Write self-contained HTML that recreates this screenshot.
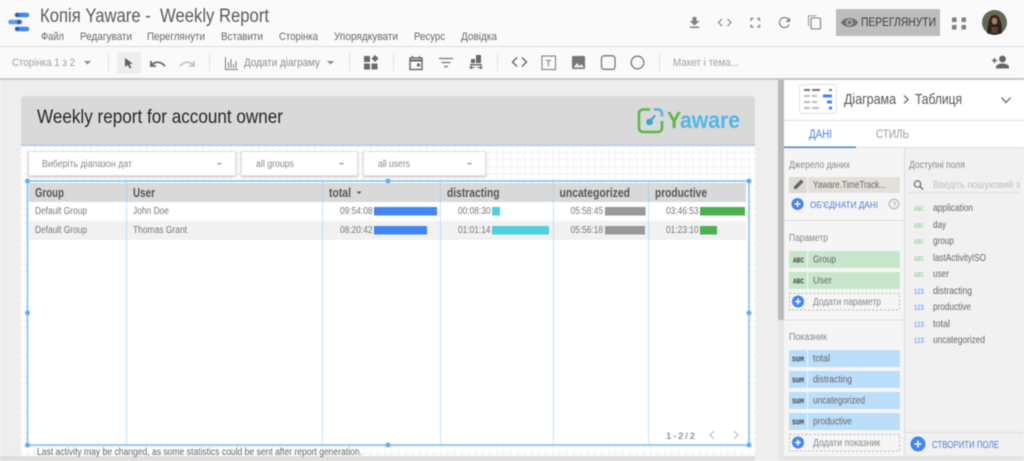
<!DOCTYPE html>
<html><head><meta charset="utf-8"><style>
html,body{margin:0;padding:0;width:1024px;height:461px;overflow:hidden;background:#fff}
svg{display:block;filter:blur(.4px)}
text{font-family:"Liberation Sans",sans-serif;white-space:pre}
.m{font-size:11px;fill:#666}
.r{font-size:10px;fill:#777}
.h{font-size:12.500px;font-weight:bold;fill:#555}
.l{font-size:10px;fill:#888}
.c{font-size:10px;fill:#666}
.b{font-size:7.500px;font-weight:bold;font-family:"Liberation Mono",monospace;fill:#444}
.f{font-size:10.500px;fill:#666}
.ga{font-size:7.500px;font-weight:bold;fill:#a5d6a7;font-family:"Liberation Mono",monospace}
.bl{font-size:8px;font-weight:bold;fill:#7fb2f0;font-family:"Liberation Mono",monospace}
</style></head><body>
<svg width="1024" height="461" viewBox="0 0 1024 461" xmlns="http://www.w3.org/2000/svg">
<defs>
<pattern id="g" width="7" height="7" patternUnits="userSpaceOnUse" x="21" y="146"><rect width="7" height="7" fill="#fff"/><path d="M7 0V7M0 7H7" stroke="#e6e6e6" stroke-width="1" fill="none"/></pattern>
</defs>
<rect width="1024" height="461" fill="#fff"/>
<!-- top bar -->
<rect y="0" width="1024" height="46" fill="#fafafa"/>
<rect y="46" width="1024" height="1" fill="#dcdcdc"/>
<rect y="47" width="1024" height="31" fill="#fafafa"/>
<rect y="78" width="1024" height="2" fill="#c8c8c8"/>
<!-- logo -->
<g stroke-linecap="round" stroke-width="4.500" fill="none">
<path d="M18 15H27" stroke="#4285f4"/><path d="M10.500 22H20" stroke="#5a9bf2"/><path d="M18 29H27" stroke="#4285f4"/>
</g>
<circle cx="17" cy="15" r="2.200" fill="#2a5cae"/><circle cx="19" cy="22" r="2.200" fill="#2a5cae"/><circle cx="17" cy="29" r="2.200" fill="#2a5cae"/>
<text x="40" y="22" font-size="19" fill="#5a5a5a" textLength="229" lengthAdjust="spacingAndGlyphs">Копія Yaware -  Weekly Report</text>
<text class="m" x="41" y="40" textLength="23" lengthAdjust="spacingAndGlyphs">Файл</text>
<text class="m" x="80" y="40" textLength="52" lengthAdjust="spacingAndGlyphs">Редагувати</text>
<text class="m" x="147" y="40" textLength="58" lengthAdjust="spacingAndGlyphs">Переглянути</text>
<text class="m" x="221" y="40" textLength="42" lengthAdjust="spacingAndGlyphs">Вставити</text>
<text class="m" x="279" y="40" textLength="39" lengthAdjust="spacingAndGlyphs">Сторінка</text>
<text class="m" x="334" y="40" textLength="64" lengthAdjust="spacingAndGlyphs">Упорядкувати</text>
<text class="m" x="414" y="40" textLength="31" lengthAdjust="spacingAndGlyphs">Ресурс</text>
<text class="m" x="461" y="40" textLength="36" lengthAdjust="spacingAndGlyphs">Довідка</text>
<!-- top right icons -->
<g fill="#808080">
<path d="M692.500 17h4v4h3l-5 4.500-5-4.500h3z"/><rect x="690" y="26.500" width="9" height="1.500"/>
<path d="M722 19l-3.500 3.500 3.500 3.500M727.500 19l3.500 3.500-3.500 3.500" fill="none" stroke="#808080" stroke-width="1.200"/>
<path d="M751 21v-2.500h2.500M757 18.500h2.500v2.500M759.500 24.500v2.500h-2.500M753.500 27h-2.500v-2.500" fill="none" stroke="#808080" stroke-width="1.300"/>
<path d="M788.500 19.500a5 5 0 1 0 .6 5" fill="none" stroke="#808080" stroke-width="1.200"/><path d="M790 17.500v4.500h-4.500z"/>
<path d="M808.500 26V15.800h8" fill="none" stroke="#a0a0a0" stroke-width="1.100"/><rect x="811" y="18" width="9.500" height="11" rx="1" fill="none" stroke="#808080" stroke-width="1.100"/>
</g>
<rect x="836" y="9" width="104" height="27" fill="#bdbdbd"/>
<path d="M841 22.500c3-6 14-6 17 0-3 6-14 6-17 0z" fill="#6f6f6f"/><circle cx="849.500" cy="22.500" r="3.400" fill="#bdbdbd"/><circle cx="849.500" cy="22.500" r="2" fill="#6f6f6f"/>
<text x="861" y="26" font-size="11.500" fill="#3c3c3c" textLength="75" lengthAdjust="spacingAndGlyphs">ПЕРЕГЛЯНУТИ</text>
<g fill="#808080"><rect x="952" y="17.500" width="4.500" height="4.500"/><rect x="961.500" y="17.500" width="4.500" height="4.500"/><rect x="952" y="25" width="4.500" height="4.500"/><rect x="961.500" y="25" width="4.500" height="4.500"/></g>
<circle cx="994.500" cy="22.500" r="12.500" fill="#5f6a52"/>
<path d="M987 33c1-10 2-18 7.500-18s7.500 8 7.500 18c-3 2-12 2-15 0z" fill="#33211b"/>
<ellipse cx="994.500" cy="21" rx="2.800" ry="3.500" fill="#a67a62"/>
<rect x="991.500" y="27" width="6" height="6" fill="#5a4238"/>
<!-- toolbar -->
<text x="12" y="66" font-size="11" fill="#a0a0a0" textLength="63" lengthAdjust="spacingAndGlyphs">Сторінка 1 з 2</text>
<path d="M84 61h7l-3.500 3.500z" fill="#8c8c8c"/>
<g fill="#e2e2e2"><rect x="108" y="53" width="1" height="18"/><rect x="209" y="53" width="1" height="18"/><rect x="349" y="53" width="1" height="18"/><rect x="393" y="53" width="1" height="18"/><rect x="497" y="53" width="1" height="18"/><rect x="659" y="53" width="1" height="18"/></g>
<rect x="117" y="52" width="24" height="22" fill="#eeeeee"/>
<path d="M125 58l7.500 5.500-3 .7 2 3.500-1.800.8-1.800-3.600-2.900 2z" fill="#5f5f5f"/>
<path d="M151 61v5h5M151.500 65.500c3-4.500 9.500-4.500 13.500.8" fill="none" stroke="#666" stroke-width="1.800"/>
<path d="M194 61v5h-5M193.500 65.500c-3-4.500-9.500-4.500-13.500.8" fill="none" stroke="#c4c4c4" stroke-width="1.800"/>
<path d="M225.500 57v12.500H238M228.500 68v-6M231 68v-9M233.500 68v-4M236 68v-7" fill="none" stroke="#7c7c7c" stroke-width="1"/>
<text x="244" y="66" font-size="11" fill="#8a8a8a" textLength="76" lengthAdjust="spacingAndGlyphs">Додати діаграму</text>
<path d="M327 61h7l-3.500 3.500z" fill="#8c8c8c"/>
<g fill="#6a6a6a"><rect x="364" y="56" width="6" height="6"/><rect x="364" y="63.500" width="6" height="6"/><rect x="371.500" y="63.500" width="6" height="6"/><path d="M375 55l3.500 3.500-3.500 3.500-3.500-3.500z"/></g>
<g fill="none" stroke="#666">
<rect x="410" y="58" width="12" height="11.500" stroke-width="1.400"/><path d="M410 60.500h12" stroke-width="2"/><path d="M412.500 56v2M419.500 56v2" stroke-width="1.400"/>
<path d="M439 58.500h14M441.500 62.500h9M444 66.500h4" stroke-width="1.300" stroke="#777"/>
</g>
<rect x="417" y="63.500" width="3" height="3" fill="#666"/>
<g fill="#666"><rect x="476" y="55" width="5" height="8"/><rect x="471" y="59" width="4" height="4"/><rect x="470" y="64" width="12" height="1.500"/></g>
<path d="M470 67.500h5M477 67.500h5M480 66l2 1.500-2 1.500M472 66l-2 1.500 2 1.500" fill="none" stroke="#666" stroke-width="1"/>
<path d="M517 57.500l-4.500 4.500 4.500 4.500M522 57.500l4.500 4.500-4.500 4.500" fill="none" stroke="#666" stroke-width="1.400"/>
<rect x="542" y="56" width="13.500" height="13.500" fill="none" stroke="#777" stroke-width="1"/>
<text x="545.500" y="66.500" font-size="9.500" fill="#666">T</text>
<rect x="572" y="56" width="13" height="13" rx="1" fill="#757575"/><path d="M573.500 67.500l3.500-4.500 2.500 3 2-2 2.500 3.500z" fill="#eee"/>
<rect x="601.500" y="55.800" width="13.500" height="13.500" rx="2.500" fill="none" stroke="#757575" stroke-width="1.300"/>
<circle cx="637.500" cy="62.500" r="6.300" fill="none" stroke="#757575" stroke-width="1.300"/>
<text x="673" y="66" font-size="11" fill="#a0a0a0" textLength="66" lengthAdjust="spacingAndGlyphs">Макет і тема...</text>
<path d="M992 60.500h5M994.500 58v5" stroke="#666" stroke-width="1.400"/>
<circle cx="1002.500" cy="59" r="3.400" fill="#666"/><path d="M996 68.500v-1.500c0-2.500 4-3.500 6.500-3.500s6.500 1 6.500 3.500v1.500z" fill="#666"/>
<!-- canvas area -->
<rect y="80" width="778" height="381" fill="#eeeeee"/>
<rect x="21" y="145" width="734" height="311" fill="url(#g)"/>
<path d="M21 145V100a4 4 0 0 1 4-4H751a4 4 0 0 1 4 4V145z" fill="#d9d9d9"/>
<rect x="21" y="145" width="734" height=".9" fill="#8fc0f7"/>
<rect x="0" y="456" width="778" height="5" fill="#dedede"/>
<text x="37" y="123" font-size="19.500" fill="#262626" textLength="246" lengthAdjust="spacingAndGlyphs">Weekly report for account owner</text>
<!-- Yaware -->
<path d="M650 109.500h-7a4 4 0 0 0-4 4v14.500a4 4 0 0 0 4 4h15a4 4 0 0 0 4-4v-7" fill="none" stroke="#5cb947" stroke-width="2.600"/>
<path d="M654 109.500h4a4 4 0 0 1 4 4v3" fill="none" stroke="#55b5e8" stroke-width="2.600"/>
<circle cx="649.500" cy="122" r="3.300" fill="#3fa0d8"/><path d="M650 121.500l5-6" stroke="#3fa0d8" stroke-width="2"/>
<text x="667" y="128" font-size="23" font-weight="bold" fill="#52b6e8" textLength="73" lengthAdjust="spacingAndGlyphs"><tspan fill="#5cb947">Y</tspan>aware</text>
<!-- filters -->
<g fill="#fff" stroke="#e2e2e2" stroke-width="1" style="filter:drop-shadow(0 1px 1px rgba(0,0,0,.25))">
<rect x="28.500" y="151.500" width="207" height="24"/><rect x="241.500" y="151.500" width="116" height="24"/><rect x="363.500" y="151.500" width="122" height="24"/>
</g>
<text class="l" x="42" y="167" textLength="90" lengthAdjust="spacingAndGlyphs">Виберіть діапазон дат</text>
<text class="l" x="256" y="167" textLength="38" lengthAdjust="spacingAndGlyphs">all groups</text>
<text class="l" x="378" y="167" textLength="32" lengthAdjust="spacingAndGlyphs">all users</text>
<g fill="#888"><rect x="217.500" y="163" width="4" height="1.200"/><rect x="339.500" y="163" width="4" height="1.200"/><rect x="467.500" y="163" width="4" height="1.200"/></g>
<!-- table -->
<rect x="28" y="182" width="720" height="262" fill="#fff"/>
<rect x="29" y="183" width="717" height="19" fill="#d9d9d9"/>
<rect x="29" y="221" width="717" height="19" fill="#f1f1f1"/>
<text class="h" x="35" y="197" textLength="29" lengthAdjust="spacingAndGlyphs">Group</text>
<text class="h" x="133" y="197" textLength="22" lengthAdjust="spacingAndGlyphs">User</text>
<text class="h" x="329" y="197" textLength="22" lengthAdjust="spacingAndGlyphs">total</text>
<path d="M356.500 191.500h5l-2.500 2.500z" fill="#555"/>
<text class="h" x="447" y="197" textLength="52.500" lengthAdjust="spacingAndGlyphs">distracting</text>
<text class="h" x="559.500" y="197" textLength="70.500" lengthAdjust="spacingAndGlyphs">uncategorized</text>
<text class="h" x="655" y="197" textLength="52" lengthAdjust="spacingAndGlyphs">productive</text>
<text class="r" x="35" y="214" textLength="52" lengthAdjust="spacingAndGlyphs">Default Group</text>
<text class="r" x="133" y="214" textLength="36" lengthAdjust="spacingAndGlyphs">John Doe</text>
<text class="r" x="35" y="233" textLength="52" lengthAdjust="spacingAndGlyphs">Default Group</text>
<text class="r" x="133" y="233" textLength="54" lengthAdjust="spacingAndGlyphs">Thomas Grant</text>
<text class="r" x="340" y="214" textLength="32.500" lengthAdjust="spacingAndGlyphs">09:54:08</text>
<text class="r" x="340" y="233" textLength="32.500" lengthAdjust="spacingAndGlyphs">08:20:42</text>
<text class="r" x="458" y="214" textLength="32.500" lengthAdjust="spacingAndGlyphs">00:08:30</text>
<text class="r" x="458" y="233" textLength="32.500" lengthAdjust="spacingAndGlyphs">01:01:14</text>
<text class="r" x="570.500" y="214" textLength="32.500" lengthAdjust="spacingAndGlyphs">05:58:45</text>
<text class="r" x="570.500" y="233" textLength="32.500" lengthAdjust="spacingAndGlyphs">05:56:18</text>
<text class="r" x="666" y="214" textLength="32.500" lengthAdjust="spacingAndGlyphs">03:46:53</text>
<text class="r" x="666" y="233" textLength="32.500" lengthAdjust="spacingAndGlyphs">01:23:10</text>
<rect x="374" y="207" width="63" height="8.500" fill="#4285f4"/><rect x="374" y="226" width="53" height="8.500" fill="#4285f4"/>
<rect x="492" y="207" width="8" height="8.500" fill="#4dd0e1"/><rect x="492" y="226" width="57" height="8.500" fill="#4dd0e1"/>
<rect x="605" y="207" width="40.500" height="8.500" fill="#999"/><rect x="605" y="226" width="40" height="8.500" fill="#999"/>
<rect x="700" y="207" width="45" height="8.500" fill="#4caf50"/><rect x="700" y="226" width="17" height="8.500" fill="#4caf50"/>
<g stroke="#8cc6fa" stroke-width="1" stroke-dasharray="1 1">
<path d="M126.500 182V445M322.500 182V445M440.500 182V445M553.500 182V445M648.500 182V445"/>
</g>
<rect x="27.500" y="181" width="721.500" height="264" fill="none" stroke="#7dbdf8" stroke-width="1.500"/>
<g fill="#5eaef5">
<circle cx="27.500" cy="181" r="2.500"/><circle cx="388" cy="181" r="2.500"/><circle cx="749" cy="181" r="2.500"/>
<circle cx="27.500" cy="313" r="2.500"/><circle cx="749" cy="313" r="2.500"/>
<circle cx="27.500" cy="445" r="2.500"/><circle cx="388" cy="445" r="2.500"/><circle cx="749" cy="445" r="2.500"/>
</g>
<text x="666" y="439" font-size="9.500" font-weight="bold" fill="#999" textLength="29" lengthAdjust="spacing">1 - 2 / 2</text>
<path d="M714 431l-4 4 4 4M734 431l4 4-4 4" fill="none" stroke="#bbb" stroke-width="1.100"/>
<text x="37" y="455" font-size="10" fill="#666" textLength="325" lengthAdjust="spacingAndGlyphs">Last activity may be changed, as some statistics could be sent after report generation.</text>
<!-- right panel -->
<rect x="755" y="80" width="23" height="381" fill="#eeeeee"/>
<rect x="778" y="80" width="6" height="240" fill="#b9b9b9"/>
<rect x="778" y="320" width="6" height="141" fill="#e6e6e6"/>
<rect x="784" y="80" width="240" height="40" fill="#fff"/>
<rect x="784" y="120" width="240" height="1" fill="#dddddd"/>
<rect x="784" y="121" width="240" height="26" fill="#fff"/>
<rect x="784" y="147" width="240" height="1" fill="#dddddd"/>
<rect x="784" y="146.500" width="72" height="1.800" fill="#4a7fdc"/>
<rect x="784" y="148" width="120" height="308" fill="#f5f5f5"/>
<rect x="904" y="148" width="1" height="313" fill="#dddddd"/>
<rect x="905" y="148" width="119" height="308" fill="#f1f1f1"/>
<rect x="784" y="456" width="240" height="5" fill="#e3e3e3"/>
<rect x="799.500" y="84.500" width="37" height="29" rx="3" fill="#fff" stroke="#e0e0e0"/>
<g fill="#777"><rect x="804" y="89" width="6" height="2"/><rect x="812" y="89" width="8" height="2"/><rect x="829" y="89" width="3" height="2"/></g>
<g fill="#bbb"><rect x="804" y="95" width="6" height="2"/><rect x="812" y="95" width="5" height="2"/><rect x="804" y="101" width="6" height="2"/><rect x="812" y="101" width="5" height="2"/><rect x="804" y="107" width="6" height="2"/><rect x="812" y="107" width="7" height="2"/></g>
<g fill="#4285f4"><rect x="823" y="94.500" width="9" height="3"/><rect x="827" y="100.500" width="5" height="3"/><rect x="829" y="106.500" width="3" height="3"/></g>
<text x="844" y="104" font-size="14.500" fill="#555" textLength="52" lengthAdjust="spacingAndGlyphs">Діаграма</text>
<path d="M904 95.500l4 4-4 4" fill="none" stroke="#7d7a62" stroke-width="1.500"/>
<text x="915" y="104" font-size="14.500" fill="#555" textLength="47" lengthAdjust="spacingAndGlyphs">Таблиця</text>
<path d="M1001.500 97.500l4.500 5 4.500-5" fill="none" stroke="#666" stroke-width="1.300"/>
<text x="809" y="138" font-size="11.500" fill="#4a7fdc" textLength="23" lengthAdjust="spacingAndGlyphs">ДАНІ</text>
<text x="876" y="138" font-size="11.500" fill="#9a9a9a" textLength="33" lengthAdjust="spacingAndGlyphs">СТИЛЬ</text>
<text class="l" x="789" y="168" textLength="61" lengthAdjust="spacingAndGlyphs">Джерело даних</text>
<rect x="789" y="177" width="18" height="16" fill="#dcdad6"/><rect x="808" y="177" width="92" height="16" fill="#e4dfd9"/>
<path d="M794 189v-2.500l7-7 2.500 2.500-7 7z" fill="#666"/>
<text class="c" x="813" y="188" textLength="73" lengthAdjust="spacingAndGlyphs">Yaware.TimeTrack...</text>
<circle cx="797.500" cy="204" r="6" fill="#4285f4"/><path d="M794.500 204h6M797.500 201v6" stroke="#fff" stroke-width="1.500"/>
<text x="810" y="208" font-size="9.500" fill="#4a7fdc" textLength="68" lengthAdjust="spacingAndGlyphs">ОБ'ЄДНАТИ ДАНІ</text>
<circle cx="894" cy="204" r="4.800" fill="none" stroke="#aaa"/><text x="892" y="207" font-size="7.500" fill="#999">?</text>
<rect x="784" y="220" width="120" height="1" fill="#dddddd"/>
<text class="l" x="789" y="241" textLength="39" lengthAdjust="spacingAndGlyphs">Параметр</text>
<rect x="789" y="251" width="111" height="17" rx="1" fill="#c8e6c9"/><rect x="807" y="251" width="1" height="17" fill="#f5f5f5"/>
<text class="b" x="793" y="262.500" textLength="11" lengthAdjust="spacingAndGlyphs">ABC</text><text class="c" x="813" y="262.500" textLength="23" lengthAdjust="spacingAndGlyphs">Group</text>
<rect x="789" y="272" width="111" height="17" rx="1" fill="#c8e6c9"/><rect x="807" y="272" width="1" height="17" fill="#f5f5f5"/>
<text class="b" x="793" y="283.500" textLength="11" lengthAdjust="spacingAndGlyphs">ABC</text><text class="c" x="813" y="283.500" textLength="19" lengthAdjust="spacingAndGlyphs">User</text>
<rect x="789.500" y="293.500" width="110" height="16.500" fill="none" stroke="#bbb" stroke-dasharray="2 2"/>
<circle cx="798" cy="301.500" r="6" fill="#4285f4"/><path d="M795 301.500h6M798 298.500v6" stroke="#fff" stroke-width="1.500"/>
<text class="l" x="813" y="305" textLength="68" lengthAdjust="spacingAndGlyphs">Додати параметр</text>
<rect x="784" y="319.500" width="120" height="1" fill="#dddddd"/>
<text class="l" x="789" y="340" textLength="38" lengthAdjust="spacingAndGlyphs">Показник</text>
<g fill="#bbdefb"><rect x="789" y="350" width="111" height="17" rx="1"/><rect x="789" y="371" width="111" height="17" rx="1"/><rect x="789" y="392" width="111" height="17" rx="1"/><rect x="789" y="413" width="111" height="17" rx="1"/></g>
<g fill="#f5f5f5"><rect x="807" y="350" width="1" height="17"/><rect x="807" y="371" width="1" height="17"/><rect x="807" y="392" width="1" height="17"/><rect x="807" y="413" width="1" height="17"/></g>
<text class="b" x="792" y="361.500" textLength="12" lengthAdjust="spacingAndGlyphs">SUM</text><text class="c" x="813" y="361.500" textLength="17" lengthAdjust="spacingAndGlyphs">total</text>
<text class="b" x="792" y="382.500" textLength="12" lengthAdjust="spacingAndGlyphs">SUM</text><text class="c" x="813" y="382.500" textLength="39" lengthAdjust="spacingAndGlyphs">distracting</text>
<text class="b" x="792" y="403.500" textLength="12" lengthAdjust="spacingAndGlyphs">SUM</text><text class="c" x="813" y="403.500" textLength="52" lengthAdjust="spacingAndGlyphs">uncategorized</text>
<text class="b" x="792" y="424.500" textLength="12" lengthAdjust="spacingAndGlyphs">SUM</text><text class="c" x="813" y="424.500" textLength="39" lengthAdjust="spacingAndGlyphs">productive</text>
<rect x="789.500" y="434.500" width="110" height="16.500" fill="none" stroke="#bbb" stroke-dasharray="2 2"/>
<circle cx="798" cy="442.500" r="6" fill="#4285f4"/><path d="M795 442.500h6M798 439.500v6" stroke="#fff" stroke-width="1.500"/>
<text class="l" x="813" y="446" textLength="67" lengthAdjust="spacingAndGlyphs">Додати показник</text>
<text class="l" x="909" y="168" textLength="56" lengthAdjust="spacingAndGlyphs">Доступні поля</text>
<circle cx="917.500" cy="184" r="3.200" fill="none" stroke="#666" stroke-width="1.200"/><path d="M920 186.500l3 3" stroke="#666" stroke-width="1.300"/>
<text x="933" y="188" font-size="10.500" fill="#bdbdbd" textLength="87" lengthAdjust="spacingAndGlyphs">Введіть пошуковий з</text>
<rect x="909" y="192" width="111" height="1" fill="#dddddd"/>
<text class="ga" x="914" y="211" textLength="10" lengthAdjust="spacingAndGlyphs">ABC</text><text class="f" x="933" y="211" textLength="40" lengthAdjust="spacingAndGlyphs">application</text>
<text class="ga" x="914" y="228" textLength="10" lengthAdjust="spacingAndGlyphs">ABC</text><text class="f" x="933" y="228" textLength="13" lengthAdjust="spacingAndGlyphs">day</text>
<text class="ga" x="914" y="244" textLength="10" lengthAdjust="spacingAndGlyphs">ABC</text><text class="f" x="933" y="244" textLength="21" lengthAdjust="spacingAndGlyphs">group</text>
<text class="ga" x="914" y="261" textLength="10" lengthAdjust="spacingAndGlyphs">ABC</text><text class="f" x="933" y="261" textLength="53" lengthAdjust="spacingAndGlyphs">lastActivityISO</text>
<text class="ga" x="914" y="277" textLength="10" lengthAdjust="spacingAndGlyphs">ABC</text><text class="f" x="933" y="277" textLength="16" lengthAdjust="spacingAndGlyphs">user</text>
<text class="bl" x="914" y="294" textLength="10" lengthAdjust="spacingAndGlyphs">123</text><text class="f" x="933" y="294" textLength="39" lengthAdjust="spacingAndGlyphs">distracting</text>
<text class="bl" x="914" y="310" textLength="10" lengthAdjust="spacingAndGlyphs">123</text><text class="f" x="933" y="310" textLength="38" lengthAdjust="spacingAndGlyphs">productive</text>
<text class="bl" x="914" y="327" textLength="10" lengthAdjust="spacingAndGlyphs">123</text><text class="f" x="933" y="327" textLength="17" lengthAdjust="spacingAndGlyphs">total</text>
<text class="bl" x="914" y="343" textLength="10" lengthAdjust="spacingAndGlyphs">123</text><text class="f" x="933" y="343" textLength="52" lengthAdjust="spacingAndGlyphs">uncategorized</text>
<rect x="905" y="432" width="119" height="1" fill="#dddddd"/>
<circle cx="918" cy="444" r="7.500" fill="#4285f4"/><path d="M914.500 444h7M918 440.500v7" stroke="#fff" stroke-width="1.600"/>
<text x="932" y="448" font-size="10" fill="#4a7fdc" textLength="67" lengthAdjust="spacingAndGlyphs">СТВОРИТИ ПОЛЕ</text>
</svg>
</body></html>
